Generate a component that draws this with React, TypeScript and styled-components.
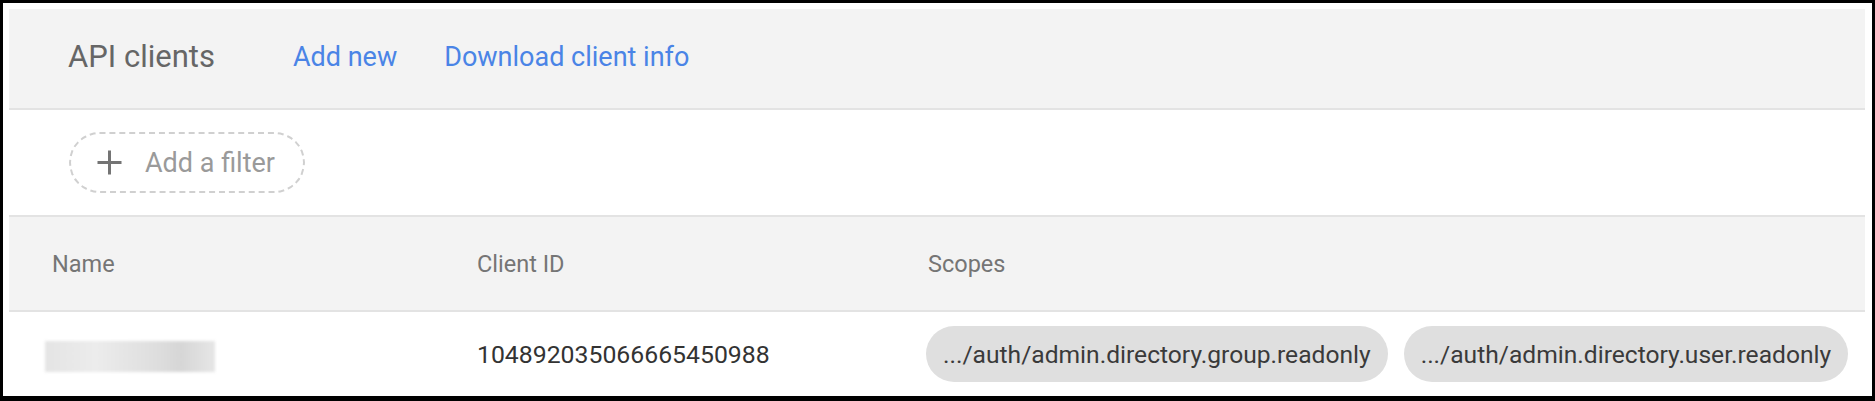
import React from "react";
import styled, { createGlobalStyle } from "styled-components";

const Global = createGlobalStyle`
  html, body { margin: 0; padding: 0; background: #ffffff; }
  body { font-family: Roboto, "Noto Sans", Arial, sans-serif; }
  * { box-sizing: border-box; }
`;

const Frame = styled.div`
  width: 1875px;
  height: 401px;
  border: 3px solid #000;
  border-bottom-width: 5px;
  padding: 6px 7px 0 6px;
  background: #fff;
  overflow: hidden;
`;

const Panel = styled.div`
  display: flex;
  flex-direction: column;
  width: 100%;
`;

const Toolbar = styled.div`
  background: #f3f3f3;
  border-bottom: 2px solid #e3e3e3;
  display: flex;
  align-items: center;
  padding: 0 0 4px 59px;
  box-sizing: content-box;
  height: 95px;
`;

const Title = styled.h1`
  margin: 0 78px 0 0;
  font-size: 31px;
  font-weight: 400;
  color: #666666;
  letter-spacing: 0;
`;

const LinkButton = styled.a`
  font-size: 27px;
  color: #4a84e6;
  text-decoration: none;
  margin-right: 47px;
  cursor: pointer;
`;

const FilterBar = styled.div`
  height: 105px;
  border-bottom: 2px solid #e3e3e3;
  box-sizing: content-box;
  display: flex;
  align-items: center;
  padding-left: 60px;
`;

const FilterPill = styled.button`
  display: flex;
  align-items: center;
  gap: 22px;
  width: 236px;
  height: 61px;
  padding: 0 0 0 25px;
  border: 2px dashed #d0d0d0;
  border-radius: 31px;
  background: transparent;
  font-family: inherit;
  font-size: 27px;
  color: #9a9a9a;
  cursor: pointer;
`;

const Row = styled.div<{ $head?: boolean }>`
  display: grid;
  grid-template-columns: 429px 449px 1fr;
  align-items: center;
  padding-left: 39px;
  height: ${(p) => (p.$head ? "93px" : "84px")};
  background: ${(p) => (p.$head ? "#f3f3f3" : "#fff")};
  border-bottom: ${(p) => (p.$head ? "2px solid #e3e3e3" : "none")};
  box-sizing: content-box;
`;

const HeadCell = styled.div<{ $shift?: number }>`
  font-size: 23.5px;
  color: #757575;
  padding-left: ${(p) => p.$shift ?? 0}px;
`;

const Cell = styled.div`
  font-size: 24.8px;
  color: #333;
  display: flex;
  align-items: center;
  gap: 16px;
`;

const Redacted = styled.div`
  width: 170px;
  height: 31px;
  margin-left: -3px;
  margin-top: 4px;
  background: linear-gradient(90deg, #e4e4e4 0%, #ececec 30%, #dedede 65%, #d6d6d6 80%, #e6e6e6 100%);
  filter: blur(1.5px);
`;

const Chip = styled.span`
  display: inline-flex;
  align-items: center;
  height: 56px;
  padding: 0 17px;
  border-radius: 28px;
  background: #dfdfdf;
  color: #3a3a3a;
  font-size: 24.6px;
  white-space: nowrap;
`;

const PlusIcon = () => (
  <svg width="27" height="27" viewBox="0 0 27 27" aria-hidden="true">
    <path d="M13.5 1.5v24M1.5 13.5h24" stroke="#747474" strokeWidth="3" fill="none" />
  </svg>
);

export default function App() {
  return (
    <>
      <Global />
      <Frame>
        <Panel>
          <Toolbar>
            <Title>API clients</Title>
            <LinkButton>Add new</LinkButton>
            <LinkButton>Download client info</LinkButton>
          </Toolbar>
          <FilterBar>
            <FilterPill>
              <PlusIcon />
              Add a filter
            </FilterPill>
          </FilterBar>
          <Row $head>
            <HeadCell $shift={4}>Name</HeadCell>
            <HeadCell>Client ID</HeadCell>
            <HeadCell $shift={2}>Scopes</HeadCell>
          </Row>
          <Row>
            <Cell>
              <Redacted />
            </Cell>
            <Cell>104892035066665450988</Cell>
            <Cell>
              <Chip>.../auth/admin.directory.group.readonly</Chip>
              <Chip>.../auth/admin.directory.user.readonly</Chip>
            </Cell>
          </Row>
        </Panel>
      </Frame>
    </>
  );
}
